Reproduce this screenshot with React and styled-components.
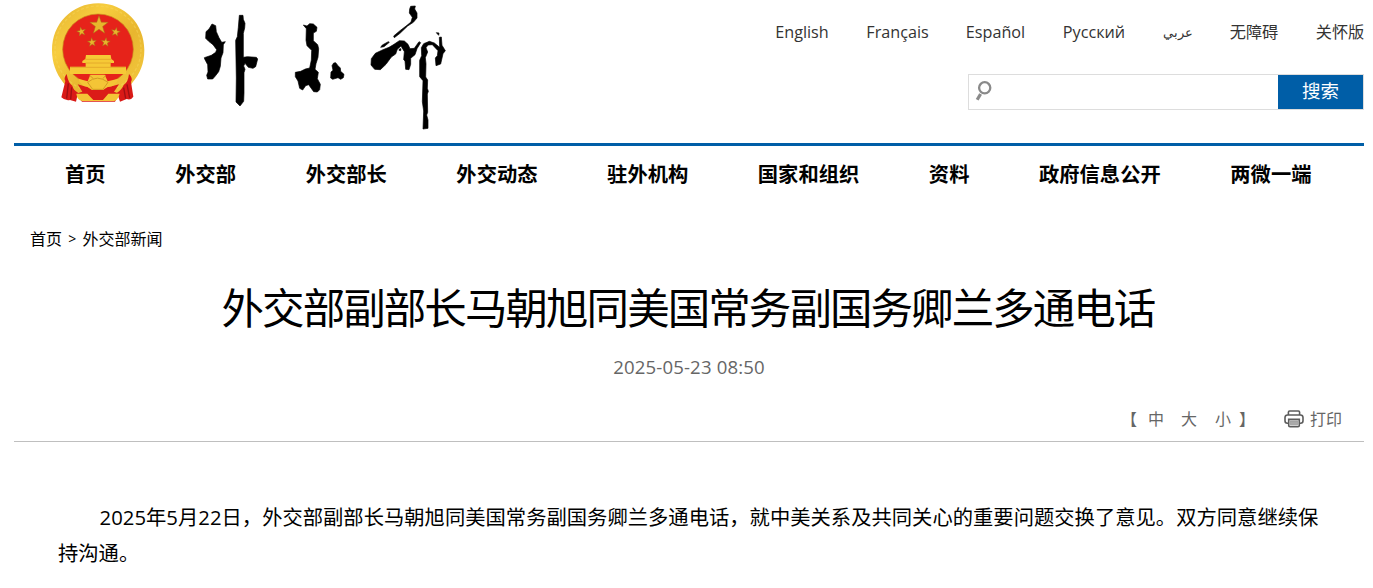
import React from 'react';
import styled, { createGlobalStyle } from 'styled-components';

const languages = [
    { label: 'English', width: 54 },
    { label: 'Français', width: 61 },
    { label: 'Español', width: 59 },
    { label: 'Русский', width: 62 },
    { label: 'عربي', width: 29, size: 12.8 },
    { label: '无障碍', width: 48 },
    { label: '关怀版', width: 48 },
];

const menu = ['首页', '外交部', '外交部长', '外交动态', '驻外机构', '国家和组织', '资料', '政府信息公开', '两微一端'];

const star = (cx, cy, r, turn = 0) => {
    const points = [];
    for (let i = 0; i < 10; i++) {
        const radius = i % 2 ? r * 0.4 : r;
        const angle = -Math.PI / 2 + turn + (i * Math.PI) / 5;
        points.push(`${(cx + radius * Math.cos(angle)).toFixed(1)},${(cy + radius * Math.sin(angle)).toFixed(1)}`);
    }
    return points.join(' ');
};

function Emblem() {
    return (
        <EmblemSvg viewBox="0 0 330 330">
            <defs>
                <linearGradient id="gold" x1="0" y1="0" x2="1" y2="1">
                    <stop offset="0" stopColor="#e3b130" />
                    <stop offset="0.3" stopColor="#f7cd3e" />
                    <stop offset="0.6" stopColor="#e8b62f" />
                    <stop offset="1" stopColor="#f5cb40" />
                </linearGradient>
            </defs>
            <path d="M160 10C240 10 298 73 298 150C298 190 285 222 262 248L230 285H90L55 248C33 220 21 188 21 150C21 73 80 10 160 10Z" fill="url(#gold)" />
            <circle cx="159" cy="147" r="129" fill="none" stroke="#f9dc65" strokeWidth="4" strokeDasharray="9 6" opacity="0.4" />
            <circle cx="159" cy="148" r="106" fill="#e6231a" stroke="#c98a1c" strokeWidth="2" />
            <g fill="#e8b52c" stroke="#a96f18" strokeWidth="1.5">
                <polygon points={star(162, 76, 29)} />
                <polygon points={star(109, 95, 14, -0.2)} />
                <polygon points={star(212, 96, 14, 0.2)} />
                <polygon points={star(141, 127, 14, -0.1)} />
                <polygon points={star(182, 127, 14, 0.1)} />
            </g>
            <path d="M123 165H197L199 177L207 183V189H197V200H243V222H75V200H122V189H112V183L121 177Z" fill="#f6c936" />
            <path d="M121 178H199M122 189H198M76 202H242" stroke="#dc9c25" strokeWidth="2" />
            <path d="M65 222Q55 235 61 243L49 292Q60 303 75 300L93 305L99 278Q85 270 82 257Q70 250 65 222Z" fill="#d91a17" />
            <path d="M252 222Q265 235 258 246L265 290Q257 302 245 297L225 305L216 278Q230 270 236 255Q249 248 252 222Z" fill="#d91a17" />
            <path d="M98 253Q158 275 222 253L207 275L223 281L210 305H111L92 281L112 275Z" fill="#db1c18" />
            <path d="M94 281H127L145 300H174L190 281H224Q218 304 204 303H112Q96 300 94 281Z" fill="#f4c536" />
            <path d="M100 236L128 244L136 224H179L188 244L220 236Q213 259 189 260L174 270H141L126 260Q106 258 100 236Z" fill="#f4c536" />
            <path d="M128 247Q157 222 189 247L174 268H143ZM145 236L134 226M173 236L183 226" fill="none" stroke="#d49a23" strokeWidth="3" />
            <path d="M70 250L65 296M80 262L77 298M246 253L254 294M236 263L242 296" stroke="#9f1013" strokeWidth="4" />
        </EmblemSvg>
    );
}

function Calligraphy() {
    return (
        <CalligraphySvg viewBox="0 0 810 405" fill="#000" stroke="#000" strokeWidth="2" strokeLinejoin="round">
            {/* 外 */}
            <g transform="translate(1 46)">
                <path d="M50 26L61 31L63 49L71 67L79 81L90 79L84 88L83 112L77 128L75 153L70 169L60 182L52 191L37 191L34 180L38 170L37 148L28 131L27 127L48 120L61 111L64 103L53 88L40 78L31 69L32 49L41 41Z" />
                <path d="M132 0H143L144 12L149 24L148 38L144 54L144 126L156 124L183 126L187 131L181 154L173 159L159 156L149 144L145 152L149 162L146 172V233L145 258L134 272L122 260L123 188L121 75L126 64L129 36Z" />
            </g>
            {/* 交 */}
            <g transform="translate(271 46)">
                <path d="M54 29L65 32L73 25L84 26L95 36L93 48L84 53L84 76L97 88L100 100L98 126L92 145L89 162L99 171L96 190L105 207L103 223L96 230L85 229L70 208L61 211L52 224L43 219L38 197L30 184L30 171L46 168L60 161L73 158L78 134L79 105L65 91L62 75L63 40Z" />
                <path d="M145 143L151 142L158 151L165 158L166 168L176 177L174 187L166 192L158 187L142 192L136 188L137 170L143 165L140 151Z" />
            </g>
            {/* 部 */}
            <g transform="translate(496 1)">
                <path d="M151 18L165 17L163 26L170 38L170 53L159 66L142 77L119 99L102 112L100 107L119 91L140 75L152 65L156 51L147 38L148 26Z" />
                <path d="M61 141L66 134L84 124L87 126L71 139Z" />
                <path d="M33 175L45 159L68 148L86 141L101 132L117 121L132 122L143 132L149 145L162 144L176 124L181 127L170 145L164 163L151 174L151 192L146 208L136 207L134 182L130 178L132 154L122 137L111 147L106 161L93 170L77 192L60 208L43 207L32 194Z" />
                <path d="M178 180L184 166L183 142L190 130L207 123L222 128L238 141L237 111L243 110L245 135L255 151L248 160L241 191L227 196L225 173L231 166L233 151L216 133L203 134L197 142L202 155L195 172L197 190L196 230L202 239L201 264L204 273L201 281L202 336L199 344L203 359L203 384L188 386L190 332L186 304L188 241L178 229Z" />
                <path d="M228 97L236 98L235 105ZM117 146L122 145L121 151L116 150Z" />
            </g>
        </CalligraphySvg>
    );
}

function SearchIcon() {
    return (
        <svg width="18" height="22" viewBox="0 0 18 22" fill="none">
            <circle cx="10.7" cy="6.8" r="5.6" stroke="#8a8a8a" strokeWidth="2.3" />
            <path d="M6.6 13L3.2 18.8" stroke="#8a8a8a" strokeWidth="3.2" />
        </svg>
    );
}

function PrintIcon() {
    return (
        <svg width="20" height="18" viewBox="0 0 20 18" fill="none" stroke="#5c5c5c" strokeWidth="1.6">
            <path d="M4.4 5V2.2Q4.4 1 5.6 1H14.4Q15.6 1 15.6 2.2V5" />
            <path d="M4.5 13.2H3.4Q1 13.2 1 10.8V7.6Q1 5 3.6 5H16.4Q19 5 19 7.6V10.8Q19 13.2 16.6 13.2H15.5" />
            <path d="M4.7 9.4H15.3V15.4Q15.3 16.6 14 16.6H6Q4.7 16.6 4.7 15.4Z" />
            <path d="M6.2 10.9H13.8V14.6H6.2Z" fill="#aaa" stroke="#999" strokeWidth="0.8" />
        </svg>
    );
}

function App() {
    return (
        <Page>
            <GlobalStyle />
            <Header>
                <Logo>
                    <Emblem />
                    <Calligraphy />
                </Logo>
                <Tools>
                    <Languages>
                        {languages.map((item) => (
                            <Language key={item.label} $width={item.width} $size={item.size}>{item.label}</Language>
                        ))}
                    </Languages>
                    <Search>
                        <SearchField><SearchIcon /></SearchField>
                        <SearchButton>搜索</SearchButton>
                    </Search>
                </Tools>
            </Header>
            <Nav>
                {menu.map((item) => <NavItem key={item}>{item}</NavItem>)}
            </Nav>
            <Breadcrumb>
                <span>首页</span>
                <Arrow>&gt;</Arrow>
                <span>外交部新闻</span>
            </Breadcrumb>
            <Title>外交部副部长马朝旭同美国常务副国务卿兰多通电话</Title>
            <Time>2025-05-23 08:50</Time>
            <Toolbar>
                <Sizes>
                    <span>【</span>
                    <span>中</span>
                    <span>大</span>
                    <span>小</span>
                    <span>】</span>
                </Sizes>
                <Print><PrintIcon />打印</Print>
            </Toolbar>
            <Article>
                2025年5月22日，外交部副部长马朝旭同美国常务副国务卿兰多通电话，就中美关系及共同关心的重要问题交换了意见。双方同意继续保持沟通。
            </Article>
        </Page>
    );
}

const GlobalStyle = createGlobalStyle`
* {
    box-sizing: border-box;
}

body {
    margin: 0;
    background: #fff;
    overflow: hidden;
}
`;

const Page = styled.div`
width: 1373px;
height: 588px;
padding: 0 9px 0 14px;
overflow: hidden;
color: #000;
font-family: "Open Sans", "Noto Sans CJK SC", sans-serif;
white-space: nowrap;
`;

const Header = styled.header`
display: flex;
justify-content: space-between;
height: 143px;
`;

const Logo = styled.div`
display: flex;
padding-left: 31px;
`;

const EmblemSvg = styled.svg`
width: 110px;
height: 110px;
`;

const CalligraphySvg = styled.svg`
width: 270px;
height: 135px;
margin-left: 40px;
`;

const Tools = styled.div`
display: flex;
flex-direction: column;
align-items: flex-end;
`;

const Languages = styled.div`
display: flex;
gap: 38px;
height: 74px;
padding-top: 20px;
color: #333;
line-height: 24px;
`;

const Language = styled.a`
display: flex;
justify-content: center;
width: ${(props) => props.$width}px;
font-size: ${(props) => props.$size || 16.2}px;
`;

const Search = styled.div`
display: flex;
width: 396px;
height: 36px;
border: 1px solid #ddd;
`;

const SearchField = styled.div`
flex: 1;
padding: 6px 0 0 5px;
`;

const SearchButton = styled.div`
width: 85px;
background: #005ea7;
color: #fff;
font-size: 18.5px;
line-height: 32px;
text-align: center;
`;

const Nav = styled.nav`
display: flex;
gap: 69.6px;
height: 74px;
padding: 13px 0 0 51px;
border-top: 3px solid #005ea7;
font-size: 20.3px;
font-weight: 700;
line-height: 30px;
`;

const NavItem = styled.a`
flex: none;
`;

const Breadcrumb = styled.div`
display: flex;
padding: 10px 0 0 16px;
font-size: 16px;
line-height: 24px;
`;

const Arrow = styled.span`
width: 20.5px;
font-size: 14px;
text-align: center;
`;

const Title = styled.h1`
margin: 27px 2px 0 0;
font-size: 42.5px;
font-weight: 400;
letter-spacing: -1.94px;
line-height: 60px;
text-align: center;
`;

const Time = styled.div`
margin-top: 15px;
color: #666;
font-size: 18.6px;
letter-spacing: 0.15px;
line-height: 28px;
text-align: center;
`;

const Toolbar = styled.div`
display: flex;
justify-content: flex-end;
height: 61px;
padding: 26px 22px 0 0;
border-bottom: 1px solid #bfbfbf;
color: #666;
font-size: 16px;
line-height: 24px;
`;

const Sizes = styled.div`
display: grid;
grid-template-columns: 27px 33px 34px 24px 16px;
margin-right: 29px;
`;

const Print = styled.div`
display: flex;
align-items: center;
gap: 6px;
height: 24px;
`;

const Article = styled.p`
width: 1266px;
margin: 57px 0 0 44px;
font-size: 20.3px;
letter-spacing: 0.03px;
line-height: 36px;
text-indent: 41.5px;
white-space: normal;
`;

export default App;
